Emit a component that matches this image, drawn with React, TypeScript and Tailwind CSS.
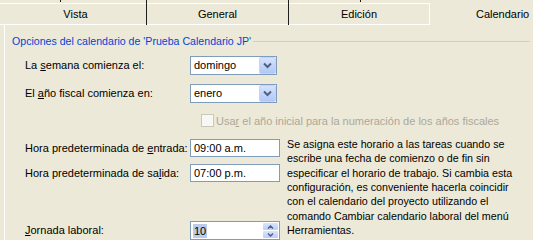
import React from "react";

const font = { fontFamily: '"Liberation Sans", Arial, sans-serif' };

const ComboButton = () => (
  <div className="w-[17px] h-[17px] rounded-[2px] border border-[#c3d3fd] bg-gradient-to-b from-[#d6e2fe] to-[#b2c7f6] flex items-center justify-center">
    <svg width="9" height="7" viewBox="0 0 9 7">
      <path d="M1 1.5 L4.5 5 L8 1.5" fill="none" stroke="#4d6185" strokeWidth="2" />
    </svg>
  </div>
);

const Combo = ({ value }: { value: string }) => (
  <div className="w-[87px] h-[19px] bg-white border border-[#7f9db9] flex items-center justify-between pl-[3px]">
    <span>{value}</span>
    <ComboButton />
  </div>
);

const TextBox = ({ value }: { value: string }) => (
  <div className="w-[90px] h-[18px] bg-white border border-[#7f9db9] flex items-center pl-[3px]">
    {value}
  </div>
);

const Spinner = () => (
  <div className="w-[90px] h-[19px] bg-white border border-[#7f9db9] flex items-center justify-between pl-[2px] pr-[1px]">
    <span className="bg-[#bccbea] px-[1px] leading-[14px]">10</span>
    <div className="flex flex-col gap-[1px]">
      <div className="w-[15px] h-[7px] rounded-[1px] bg-gradient-to-b from-[#d9e4fe] to-[#bccdf7] flex items-center justify-center">
        <svg width="7" height="4" viewBox="0 0 7 4">
          <path d="M1 3.5 L3.5 1 L6 3.5" fill="none" stroke="#4d6185" strokeWidth="1.5" />
        </svg>
      </div>
      <div className="w-[15px] h-[7px] rounded-[1px] bg-gradient-to-b from-[#d9e4fe] to-[#bccdf7] flex items-center justify-center">
        <svg width="7" height="4" viewBox="0 0 7 4">
          <path d="M1 0.5 L3.5 3 L6 0.5" fill="none" stroke="#4d6185" strokeWidth="1.5" />
        </svg>
      </div>
    </div>
  </div>
);

const Label = ({ children }: { children: React.ReactNode }) => (
  <div className="w-[165px] whitespace-nowrap">{children}</div>
);

const descLines = [
  "Se asigna este horario a las tareas cuando se",
  "escribe una fecha de comienzo o de fin sin",
  "especificar el horario de trabajo. Si cambia esta",
  "configuración, es conveniente hacerla coincidir",
  "con el calendario del proyecto utilizando el",
  "comando Cambiar calendario laboral del menú",
  "Herramientas.",
];

export default function App() {
  return (
    <div
      className="w-[533px] h-[240px] overflow-hidden bg-[#ece9d8] text-[11px] text-black leading-[13px]"
      style={font}
    >
      {/* tabs */}
      <div className="flex h-[25px]">
        <div className="w-[147px] border-r border-[#1e1e1e] flex flex-col">
          <div className="h-[3px] pl-[60px]">
            <div className="w-[1px] h-[2px] bg-[#1e1e1e]" />
          </div>
          <div className="h-[22px] border-t border-b border-white flex items-center justify-center pl-[5px]">
            Vista
          </div>
        </div>
        <div className="w-[142px] border-r border-[#1e1e1e] flex flex-col">
          <div className="h-[3px]" />
          <div className="h-[22px] border-t border-b border-white flex items-center justify-center">
            General
          </div>
        </div>
        <div className="w-[141px] flex flex-col">
          <div className="h-[3px] pl-[71px]">
            <div className="w-[1px] h-[2px] bg-[#1e1e1e]" />
          </div>
          <div className="h-[22px] border-t border-b border-r border-white flex items-center justify-center">
            Edición
          </div>
        </div>
        <div className="flex-1 flex flex-col">
          <div className="h-[3px]" />
          <div className="h-[22px] flex items-center pl-[46px]">Calendario</div>
        </div>
      </div>

      {/* panel */}
      <div className="ml-[4px] border-l border-white h-[215px] pl-[7px] pt-[10px]">
        <div className="flex items-center h-[13px] pr-[3px]">
          <span className="text-[#0046d5] whitespace-nowrap text-[10.6px]">
            Opciones del calendario de 'Prueba Calendario JP'
          </span>
          <div className="flex-1 h-[1px] bg-[#d0d0bf] ml-[2px]" />
        </div>

        <div className="ml-[13px]">
          <div className="flex items-center mt-[8px]">
            <Label>
              La <u>s</u>emana comienza el:
            </Label>
            <Combo value="domingo" />
          </div>
          <div className="flex items-center mt-[9px]">
            <Label>
              El <u>a</u>ño fiscal comienza en:
            </Label>
            <Combo value="enero" />
          </div>
          <div className="flex items-center mt-[10px] ml-[176px] text-[#aca899]">
            <div className="w-[13px] h-[13px] border border-[#cac8bb] bg-[#f7f7f3] mr-[2px]" />
            <span className="whitespace-nowrap pt-[2px]">
              Usa<u>r</u> el año inicial para la numeración de los años fiscales
            </span>
          </div>

          <div className="flex mt-[9px]">
            <div className="flex flex-col pt-[2px]">
              <div className="flex items-center">
                <Label>
                  Hora predeterminada de <u>e</u>ntrada:
                </Label>
                <TextBox value="09:00 a.m." />
              </div>
              <div className="flex items-center mt-[7px]">
                <Label>
                  Hora predeterminada de sa<u>l</u>ida:
                </Label>
                <TextBox value="07:00 p.m." />
              </div>
              <div className="flex items-center mt-[39px]">
                <Label>
                  <u>J</u>ornada laboral:
                </Label>
                <Spinner />
              </div>
            </div>
            <div className="ml-[7px] text-[10.7px] leading-[14.33px] whitespace-nowrap">
              {descLines.map((l, i) => (
                <div key={i}>{l}</div>
              ))}
            </div>
          </div>
        </div>
      </div>
    </div>
  );
}
